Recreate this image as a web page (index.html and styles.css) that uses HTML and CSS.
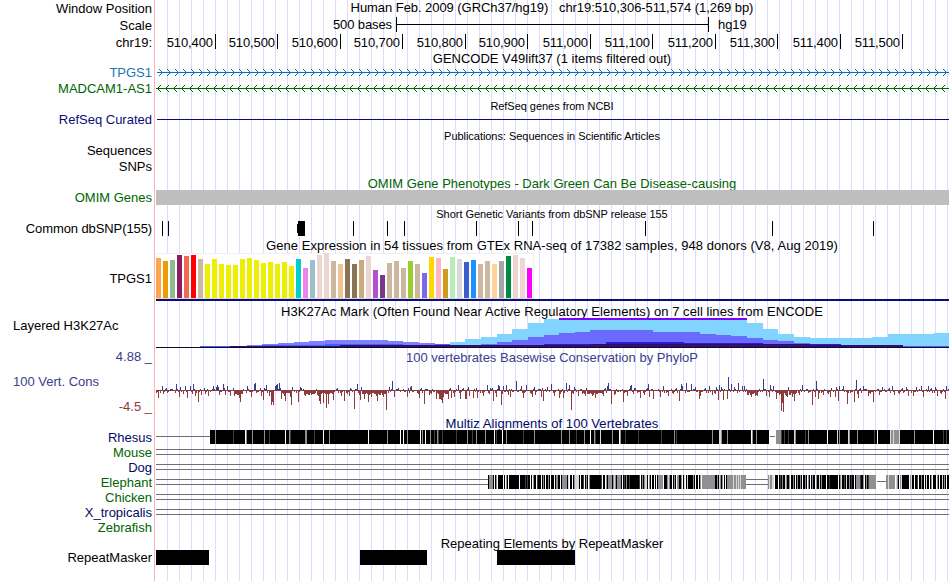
FILE: index.html
```
<!DOCTYPE html>
<html lang="en">
<head>
    <meta charset="UTF-8">
    <meta name="viewport" content="width=device-width, initial-scale=1.0">
    <title>Human chr19:510,306-511,574 - Genome Browser</title>
    <link rel="stylesheet" href="styles.css">
</head>
<body>
    <div class="browser">
        <div class="row position">
            <div class="label">Window Position</div>
            <div class="title">Human Feb. 2009 (GRCh37/hg19) &nbsp; chr19:510,306-511,574 (1,269 bp)</div>
        </div>
        <div class="row scale">
            <div class="label">Scale</div>
            <svg id="scale" width="794" height="17" viewBox="155 17 794 17"></svg>
        </div>
        <div class="row ruler">
            <div class="label">chr19:</div>
            <svg id="ruler" width="794" height="16" viewBox="155 34 794 16"></svg>
        </div>

        <div class="row">
            <div class="title">GENCODE V49lift37 (1 items filtered out)</div>
        </div>
        <div class="row dense">
            <div class="label coding">TPGS1</div>
            <svg id="tpgs1" width="794" height="16" viewBox="155 65 794 16"></svg>
        </div>
        <div class="row dense">
            <div class="label green">MADCAM1-AS1</div>
            <svg id="madcam1" width="794" height="16" viewBox="155 81 794 16"></svg>
        </div>

        <div class="row">
            <div class="title small">RefSeq genes from NCBI</div>
        </div>
        <div class="row">
            <div class="label navy">RefSeq Curated</div>
            <svg id="refseq" width="794" height="15" viewBox="155 112 794 15"></svg>
        </div>

        <div class="row dense">
            <div class="title small">Publications: Sequences in Scientific Articles</div>
        </div>
        <div class="row dense">
            <div class="label">Sequences</div>
        </div>
        <div class="row dense">
            <div class="label">SNPs</div>
        </div>

        <div class="row">
            <div class="title green">OMIM Gene Phenotypes - Dark Green Can Be Disease-causing</div>
        </div>
        <div class="row">
            <div class="label green">OMIM Genes</div>
            <svg id="omim" width="794" height="15" viewBox="155 190 794 15"></svg>
        </div>

        <div class="row dense">
            <div class="title small">Short Genetic Variants from dbSNP release 155</div>
        </div>
        <div class="row dense">
            <div class="label tight">Common dbSNP(155)</div>
            <svg id="dbsnp" width="794" height="16" viewBox="155 221 794 16"></svg>
        </div>

        <div class="row dense">
            <div class="title loose">Gene Expression in 54 tissues from GTEx RNA-seq of 17382 samples, 948 donors (V8, Aug 2019)</div>
        </div>
        <div class="row gtex">
            <div class="label">TPGS1</div>
            <svg id="gtex" width="794" height="48" viewBox="155 253 794 48"></svg>
        </div>

        <div class="row histone-title">
            <div class="title loose">H3K27Ac Mark (Often Found Near Active Regulatory Elements) on 7 cell lines from ENCODE</div>
        </div>
        <div class="row histone">
            <div class="label left">Layered H3K27Ac</div>
            <svg id="histone" width="794" height="32" viewBox="155 317 794 32"></svg>
        </div>

        <div class="row dense">
            <div class="label cons">4.88 _</div>
            <div class="title cons">100 vertebrates Basewise Conservation by PhyloP</div>
        </div>
        <div class="row phylop">
            <div class="label-group">
                <div class="label left cons">100 Vert. Cons</div>
                <div class="label negative">-4.5 _</div>
            </div>
            <svg id="phylop" width="794" height="50" viewBox="155 365 794 50"></svg>
        </div>

        <div class="row">
            <div class="title species-a loose">Multiz Alignments of 100 Vertebrates</div>
        </div>
        <div class="row">
            <div class="label species-a">Rhesus</div>
            <svg id="rhesus" width="794" height="15" viewBox="155 430 794 15"></svg>
        </div>
        <div class="row">
            <div class="label green">Mouse</div>
            <svg id="mouse" width="794" height="15" viewBox="155 445 794 15"></svg>
        </div>
        <div class="row">
            <div class="label species-a">Dog</div>
            <svg id="dog" width="794" height="15" viewBox="155 460 794 15"></svg>
        </div>
        <div class="row">
            <div class="label green">Elephant</div>
            <svg id="elephant" width="794" height="15" viewBox="155 475 794 15"></svg>
        </div>
        <div class="row">
            <div class="label green">Chicken</div>
            <svg id="chicken" width="794" height="15" viewBox="155 490 794 15"></svg>
        </div>
        <div class="row">
            <div class="label species-a">X_tropicalis</div>
            <svg id="xtropicalis" width="794" height="15" viewBox="155 505 794 15"></svg>
        </div>
        <div class="row">
            <div class="label green">Zebrafish</div>
        </div>

        <div class="row">
            <div class="title">Repeating Elements by RepeatMasker</div>
        </div>
        <div class="row">
            <div class="label">RepeatMasker</div>
            <svg id="repeats" width="794" height="15" viewBox="155 550 794 15"></svg>
        </div>
    </div>

    <script src="tracks.js"></script>
</body>
</html>
```
FILE: styles.css
```
body {
    margin: 0;
    background-color: white;
    font-family: "Liberation Sans", Arial, sans-serif;
    font-size: 13px;
    line-height: 15px;
    color: #000;
    overflow: hidden;
}
.browser {
    width: 949px;
    height: 581px;
    /* pink divider after the labels, then a guide line every 12px */
    background:
        linear-gradient(#ffb4b4, #ffb4b4) 154px 0 / 1px 100% no-repeat,
        repeating-linear-gradient(to right, #dcdcff 0, #dcdcff 1px, transparent 1px, transparent 12px) 167px 0 / 782px 100% no-repeat;
}
.row {
    display: grid;
    grid-template-columns: 155px 794px;
    height: 15px;
}
.dense, .ruler {
    height: 16px;
}
.position, .scale {
    height: 17px;
}
.gtex {
    height: 48px;
}
.histone-title {
    height: 16px;
}
.histone {
    height: 32px;
}
.phylop {
    height: 50px;
}
.label {
    grid-column: 1;
    padding-right: 3px;
    text-align: right;
    white-space: nowrap;
}
.title {
    grid-column: 2;
    padding-top: 1px;
    text-align: center;
    white-space: nowrap;
}
.small {
    padding-top: 2px;
    font-size: 11px;
    letter-spacing: -0.04px;
}
.loose {
    letter-spacing: 0.05px;
}
.tight {
    letter-spacing: -0.1px;
}
.left {
    padding-left: 13px;
    text-align: left;
}
.position .label, .scale .label, .ruler .label, .histone .label {
    padding-top: 1px;
}
.position .title {
    padding-top: 0;
    letter-spacing: -0.06px;
}
.ruler svg, .scale svg {
    letter-spacing: -0.1px;
}
.gtex .label {
    padding-top: 18px;
}
.histone-title .title {
    padding-top: 3px;
}
.label-group {
    display: flex;
    flex-direction: column;
    gap: 10px;
    padding-top: 9px;
}
svg {
    display: block;
    grid-column: 2;
    shape-rendering: crispEdges;
}
.coding {
    color: #1b75b5;
}
.green {
    color: #006400;
}
.navy {
    color: #0c0c78;
}
.species-a {
    color: #000a64;
}
.cons {
    color: #3c3c8c;
}
.negative {
    color: #8c3c3c;
}
```
FILE: tracks.js
```
const START = 156;
const END = 949;

function add(id, name, attrs, text) {
    const el = document.createElementNS('http://www.w3.org/2000/svg', name);
    for (const key in attrs) {
        el.setAttribute(key, attrs[key]);
    }
    if (text) {
        el.textContent = text;
    }
    document.getElementById(id).appendChild(el);
}

function rect(id, x, y, width, height, fill) {
    add(id, 'rect', { x, y, width, height, fill });
}

// Scale bar
rect('scale', 396, 24, 313, 1, '#000');
rect('scale', 396, 17, 1, 15, '#000');
rect('scale', 708, 17, 1, 15, '#000');
add('scale', 'text', { x: 392, y: 29, 'text-anchor': 'end' }, '500 bases');
add('scale', 'text', { x: 718, y: 29 }, 'hg19');

// Ruler
[215, 277, 340, 402, 465, 527, 590, 652, 715, 777, 840, 902].forEach((x, i) => {
    rect('ruler', x, 34, 1, 15, '#000');
    add('ruler', 'text', { x: x - 2, y: 47, 'text-anchor': 'end' }, (510400 + i * 100).toLocaleString('en-US'));
});

// Introns with strand arrows, dir is 1 for forward and -1 for reverse
function drawIntron(id, y, first, dir, color) {
    rect(id, START + (dir > 0 ? 1 : 0), y, END - START, 1, color);
    for (let tip = first; tip < END; tip += 8) {
        for (let i = 1; i <= 3; i++) {
            rect(id, tip - dir * i, y - i, 1, 1, color);
            rect(id, tip - dir * i, y + i, 1, 1, color);
        }
    }
}
drawIntron('tpgs1', 72, 162, 1, '#0072bc');
drawIntron('madcam1', 88, 157, -1, '#006400');
rect('refseq', 157, 119, END - 157, 1, '#0c0c78');

rect('omim', START, 190, END - START, 15, '#bebebe');

// Common variants
[162, 168, 353, 387, 404, 476, 518, 532, 645, 772, 873].forEach(x => rect('dbsnp', x, 221, 1, 15, '#000'));
rect('dbsnp', 298, 221, 7, 15, '#000');
rect('dbsnp', 297, 224, 1, 9, '#000');

// GTEx tissues: [height, color]
const tissues = [
    [40, '#ffa54f'], [37, '#ee9a00'], [38, '#8fbc8f'], [43, '#8b1c62'], [42, '#ee6a50'], [43, '#ff0000'],
    [39, '#cdb79e'], [34, '#eeee00'], [39, '#eeee00'], [34, '#eeee00'], [33, '#eeee00'], [33, '#eeee00'],
    [39, '#eeee00'], [40, '#eeee00'], [38, '#eeee00'], [35, '#eeee00'], [36, '#eeee00'], [34, '#eeee00'],
    [36, '#eeee00'], [32, '#eeee00'], [39, '#00cdcd'], [30, '#ee82ee'], [38, '#9ac0cd'], [43, '#eed5d2'],
    [45, '#eed5d2'], [37, '#cdb79e'], [34, '#eec591'], [39, '#8b7355'], [34, '#8b7355'], [38, '#cdaa7d'],
    [42, '#eed5d2'], [28, '#b452cd'], [23, '#7a378b'], [35, '#cdb79e'], [37, '#cdb79e'], [30, '#cdb79e'],
    [37, '#9acd32'], [34, '#cdb79e'], [25, '#7a67ee'], [41, '#ffd700'], [40, '#ffb6c1'], [29, '#cd9b1d'],
    [41, '#b4eeb4'], [39, '#d9d9d9'], [36, '#3a5fcd'], [38, '#1e90ff'], [34, '#cdb79e'], [37, '#cdb79e'],
    [34, '#ffd39b'], [37, '#a6a6a6'], [42, '#008b45'], [43, '#eed5d2'], [40, '#eed5d2'], [30, '#ff00ff']
];
rect('gtex', START, 253, 378, 46, '#f0f0f0');
rect('gtex', START, 254, 377, 44, '#fff');
rect('gtex', START, 298, 378, 1, '#d9d9d9');
tissues.forEach(([height, color], i) => rect('gtex', START + i * 7, 298 - height, 5, height, color));
rect('gtex', START, 299, END - START, 2, '#0c0c78');

// Layered signal: steps are [x, top], every layer ends at the given x
function drawLayer(steps, end, color) {
    steps.forEach(([x, top], i) => {
        const next = i + 1 < steps.length ? steps[i + 1][0] : end;
        rect('histone', x, top, next - x, 347 - top, color);
    });
}
drawLayer([[450, 342], [465, 339], [481, 337], [497, 334], [512, 329], [528, 323], [544, 319], [747, 323],
    [763, 329], [778, 334], [794, 337], [810, 338], [872, 337], [888, 334], [934, 333]], END, '#80d4ff');
drawLayer([[200, 346], [247, 345], [262, 344], [278, 343], [294, 342], [309, 341], [325, 340], [388, 341],
    [403, 342], [419, 343], [435, 344]], 450, '#8080ff');
drawLayer([[481, 344], [497, 342], [512, 340], [528, 337], [544, 335], [559, 333], [575, 332], [590, 330],
    [653, 332], [700, 334], [716, 335], [731, 336], [747, 338], [763, 340], [778, 341], [794, 343], [810, 344]], 841, '#6a6aff');
drawLayer([[200, 346], [262, 345], [325, 344], [403, 345], [435, 344], [450, 345]], 481, '#4060ff');
drawLayer([[481, 345], [544, 344], [606, 342], [684, 343], [763, 344]], 841, '#2a1ad2');
drawLayer([[230, 346], [340, 345], [590, 344], [810, 345]], 903, '#30106e');
rect('histone', 559, 318, 188, 2, '#8000ff');
rect('histone', 903, 346, 46, 1, '#4060ff');
rect('histone', START, 347, END - START, 1, '#140828');

// PhyloP peaks: x, height
const up = [
    162, 4, 176, 6, 180, 3, 185, 4, 190, 4, 193, 6, 195, 4, 204, 2, 213, 4, 216, 3, 217, 5, 218, 3, 223, 6,
    227, 4, 233, 2, 247, 4, 254, 6, 255, 7, 260, 2, 264, 2, 266, 5, 275, 4, 276, 5, 277, 6, 279, 7, 280, 2,
    292, 3, 300, 3, 301, 2, 316, 1, 336, 1, 351, 1, 357, 6, 361, 3, 389, 3, 392, 9, 398, 2, 410, 3, 411, 4,
    458, 5, 468, 3, 476, 2, 487, 5, 490, 2, 498, 5, 499, 4, 503, 4, 506, 5, 516, 9, 521, 4, 523, 4, 526, 5,
    534, 3, 542, 2, 547, 3, 551, 6, 566, 7, 569, 5, 574, 3, 586, 2, 607, 4, 608, 7, 630, 4, 631, 5, 635, 2,
    648, 6, 663, 4, 681, 6, 682, 4, 686, 7, 691, 6, 695, 3, 709, 4, 716, 3, 719, 5, 721, 3, 728, 13, 731, 6,
    734, 3, 738, 7, 742, 4, 744, 4, 763, 11, 769, 4, 770, 5, 773, 4, 788, 3, 802, 5, 816, 9, 836, 3, 839, 4,
    843, 4, 856, 10, 863, 4, 882, 3, 892, 4, 906, 3, 916, 3, 921, 4, 928, 4, 935, 3, 946, 4
];
const down = [
    158, 7, 160, 2, 179, 6, 183, 3, 187, 7, 195, 5, 198, 11, 201, 4, 208, 5, 219, 4, 225, 4, 230, 5, 239, 7,
    240, 11, 251, 6, 261, 5, 263, 9, 269, 5, 271, 14, 272, 11, 273, 14, 281, 8, 284, 5, 285, 10, 290, 6,
    291, 14, 298, 11, 319, 10, 320, 13, 323, 12, 326, 17, 328, 13, 333, 9, 341, 5, 344, 10, 349, 5, 354, 18,
    360, 9, 364, 8, 368, 11, 371, 6, 377, 10, 383, 6, 386, 19, 394, 6, 407, 6, 419, 7, 424, 13, 429, 4,
    436, 8, 439, 8, 440, 8, 441, 9, 442, 12, 443, 6, 448, 8, 451, 7, 454, 6, 460, 8, 465, 8, 466, 8, 469, 5,
    473, 7, 477, 7, 483, 5, 493, 10, 496, 6, 501, 14, 508, 4, 510, 6, 523, 7, 532, 6, 535, 4, 541, 6,
    543, 10, 554, 5, 559, 7, 563, 7, 571, 19, 578, 5, 585, 5, 592, 5, 595, 7, 603, 5, 611, 13, 614, 4,
    623, 11, 627, 5, 633, 3, 640, 7, 644, 4, 649, 6, 653, 8, 660, 6, 668, 5, 679, 10, 699, 8, 700, 5,
    712, 4, 718, 9, 723, 9, 727, 8, 748, 4, 751, 6, 755, 5, 766, 5, 769, 6, 776, 8, 781, 20, 782, 12,
    783, 21, 787, 6, 792, 6, 794, 10, 799, 4, 812, 14, 815, 6, 818, 8, 823, 4, 830, 6, 835, 6, 838, 10,
    847, 13, 854, 11, 858, 7, 868, 5, 873, 11, 879, 4, 894, 4, 908, 5, 913, 5, 923, 6, 937, 5, 945, 8
];
const peaks = {};
for (let i = 0; i < up.length; i += 2) {
    peaks[up[i]] = up[i + 1];
}
for (let i = 0; i < down.length; i += 2) {
    peaks[down[i]] = -down[i + 1];
}
// low signal between the peaks
const low = [0, -1, 1, -1, -2, 0, 1, -2, 0, 2, -1, -3, 0, 0, -1, 1, -2, 0, -1, 1, 0, -1, 1];
// stretches where the signal stays below zero
const negative = [[234, 242], [281, 291], [304, 333], [358, 386], [436, 447], [582, 600], [747, 757], [778, 796]];
rect('phylop', START, 390, END - START, 1, '#8c3c3c');
for (let x = START; x < END; x++) {
    let value = peaks[x];
    if (value === undefined) {
        value = low[(x * 7 + (x >> 3)) % low.length];
        if (negative.some(([from, to]) => x >= from && x <= to)) {
            value = -Math.abs(value) - 2;
        }
    }
    if (value > 0) {
        rect('phylop', x, 390 - value, 1, value, '#3c3c8c');
    } else if (value < 0) {
        rect('phylop', x, 390, 1, 1 - value, '#8c3c3c');
    }
}

// Alignments
const shades = { B: '#000', D: '#404040', G: '#909090', L: '#d8d8d8', W: '#fff' };

function drawDoubleLine(id, y, from, to) {
    rect(id, from, y, to - from, 1, '#707070');
    rect(id, from, y + 5, to - from, 1, '#707070');
}

function drawMarks(id, y, shade, marks) {
    marks.forEach(x => rect(id, x, y, 1, 14, shades[shade]));
}

function drawShades(id, y, x, codes) {
    codes.split('').forEach((code, i) => rect(id, x + i, y, 1, 14, shades[code]));
}

rect('rhesus', START, 436, 54, 1, '#707070');
rect('rhesus', 210, 430, 559, 14, '#000');
rect('rhesus', 769, 430, 7, 14, '#fff');
rect('rhesus', 770, 436, 5, 1, '#707070');
rect('rhesus', 776, 430, 173, 14, '#000');
rect('rhesus', 776, 430, 5, 14, '#909090');
rect('rhesus', 890, 430, 10, 14, '#909090');
drawMarks('rhesus', 430, 'W', [245, 285, 323, 368, 400, 403, 420, 425, 494, 502, 590, 619, 751, 827, 877, 933]);
drawMarks('rhesus', 430, 'L', [600, 719, 720, 794, 837, 848, 890, 893, 899]);
drawMarks('rhesus', 430, 'G', [215, 246, 252, 264, 289, 305, 306, 329, 387, 407, 422, 430, 437, 467, 476, 485, 506, 534,
    561, 569, 584, 594, 612, 620, 674, 712, 721, 727, 752, 756, 795, 808, 839, 849, 857, 914]);
drawMarks('rhesus', 430, 'D', [233, 269, 290, 314, 434, 438, 442, 456, 472, 496, 523, 576, 595, 625, 638, 661, 676,
    781, 784, 788, 805, 874, 943, 946]);

drawDoubleLine('mouse', 449, START, END);
drawDoubleLine('dog', 464, START, END);
drawDoubleLine('chicken', 494, START, END);
drawDoubleLine('xtropicalis', 509, START, END);

drawDoubleLine('elephant', 479, START, 488);
drawDoubleLine('elephant', 479, 746, 768);
rect('elephant', 877, 481, 9, 1, '#707070');
drawShades('elephant', 475, 488,
    'BGGGGBWBGWBBBBBWBWGBWBBBBBBBBBBWBBBBBDBDBBWBWGBBWDBBBWBGBWBB' +
    'GBWBBBWBGGBBWBGGGGGBLWBBWBGLLLLBWBBDWBGBWGBBBBBBBBBBBDWBBWGB' +
    'GGGGBGLGBGGGGBWBDBGBBDBBBBBBBBBDWBGBGLLBWGBWBBWBWBGGGGGWBBBG' +
    'LGBBWBGBWGGBBGWBLWBLBBBBBGBWBBWBGWGGGGGGGGGGGGG' +
    'BBGBLGBGWBWBGGGGGGLGGLGLGLGGGGG');
drawShades('elephant', 475, 768,
    'GLGGLLWBBBWBDBGBBLGBBGWBBGBWBGBBGBWBBGBWGBWBGBBWGBBLBGBBBBWBBDBBBBBBBBWBGLBBDBLBBGBDBBWBGGGGDBBGWBGBDGGGGGGG');
drawShades('elephant', 475, 886,
    'GGLGGGGGGWLGBWGLBBBBBBBWGLBBWBBDWBBGBBWBLBBWBGWBBBWGBWBBLBGBWBB');

// Repeats
rect('repeats', START, 550, 53, 15, '#000');
rect('repeats', 360, 550, 67, 15, '#000');
rect('repeats', 497, 550, 78, 15, '#000');
```
